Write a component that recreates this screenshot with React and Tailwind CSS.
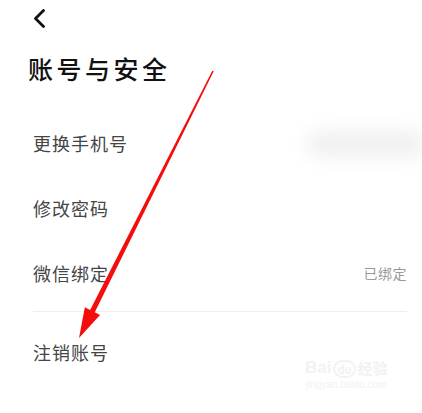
import React from "react";

const rows = [
  { label: "更换手机号", value: "phone" },
  { label: "修改密码" },
  { label: "微信绑定", value: "已绑定" },
];

function Arrow() {
  // red hand-drawn style arrow pointing at 注销账号
  const tip = [79, 338];
  const start = [213, 71];
  const dx = tip[0] - start[0];
  const dy = tip[1] - start[1];
  const len = Math.hypot(dx, dy);
  const ux = dx / len;
  const uy = dy / len;
  const nx = -uy;
  const ny = ux;
  const headLen = 30;
  const headHalf = 8.5;
  const base = [tip[0] - ux * headLen, tip[1] - uy * headLen];
  const w0 = 0.8;
  const w1 = 2.6;
  const shaft = [
    [start[0] + nx * w0, start[1] + ny * w0],
    [base[0] + nx * w1, base[1] + ny * w1],
    [base[0] + nx * headHalf, base[1] + ny * headHalf],
    tip,
    [base[0] - nx * headHalf, base[1] - ny * headHalf],
    [base[0] - nx * w1, base[1] - ny * w1],
    [start[0] - nx * w0, start[1] - ny * w0],
  ];
  return (
    <svg className="pointer-events-none absolute left-0 top-0" width="422" height="413" viewBox="0 0 422 413">
      <polygon points={shaft.map((p) => p.join(",")).join(" ")} fill="#f50d0d" />
    </svg>
  );
}

export default function App() {
  return (
    <div
      className="relative h-[413px] w-[422px] overflow-hidden bg-white"
      style={{ fontFamily: '"Noto Sans CJK SC", "Noto Sans", sans-serif' }}
    >
      <div className="pl-[31px] pt-[9px]">
        <svg width="16" height="19" viewBox="0 0 16 19" fill="none">
          <path d="M12.5 1.5 L4.5 9.5 L12.5 17.5" stroke="#111" strokeWidth="2.8" strokeLinecap="round" strokeLinejoin="round" />
        </svg>
      </div>
      <h1 className="mt-[23px] pl-[28px] text-[25px] font-medium leading-[34px] tracking-[3.5px] text-[#111]">
        账号与安全
      </h1>
      <div className="mt-[26px] pl-[33px] pr-[15px]">
        <div className="border-b border-[#eeeeee] pb-[5px]">
          {rows.map((r) => (
            <div key={r.label} className="flex h-[65px] items-center justify-between">
              <span className="text-[18px] tracking-[1px] text-[#454545]">{r.label}</span>
              {r.value === "phone" ? (
                <span className="mr-[-20px] block h-[26px] w-[120px] rounded-full bg-[#f0f0f0] blur-[9px]" />
              ) : r.value ? (
                <span className="text-[14px] tracking-[0.5px] text-[#9a9a9a]">{r.value}</span>
              ) : null}
            </div>
          ))}
        </div>
        <div className="flex h-[80px] items-center">
          <span className="text-[18px] tracking-[1px] text-[#454545]">注销账号</span>
        </div>
      </div>
      <div className="pointer-events-none absolute left-[305px] top-[358px] flex flex-col items-center text-[#f2f2f2]">
        <div className="flex items-end gap-[2px] font-bold">
          <span className="text-[17px] leading-[20px]" style={{ fontFamily: '"Liberation Sans", sans-serif' }}>Bai</span>
          <span className="rounded-full border-[2px] border-[#f2f2f2] px-[2px] text-[11px] leading-[14px]">du</span>
          <span className="text-[15px] leading-[20px]">经验</span>
        </div>
        <span className="text-[10px] leading-[14px]" style={{ fontFamily: '"Liberation Sans", sans-serif' }}>jingyan.baidu.com</span>
      </div>
      <Arrow />
    </div>
  );
}
